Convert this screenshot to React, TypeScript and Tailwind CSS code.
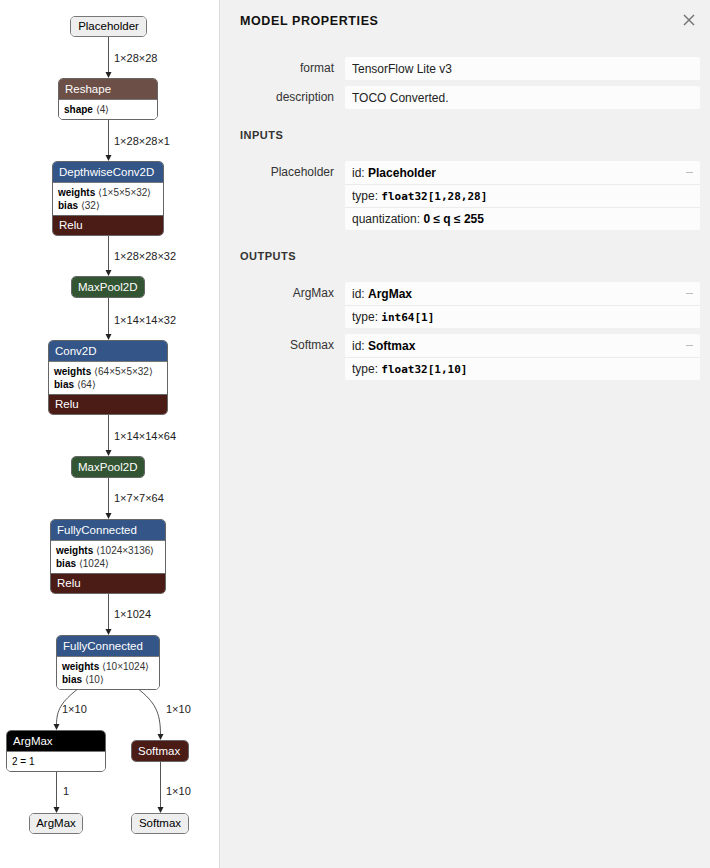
import React from 'react';

type Kind = 'io' | 'shape' | 'layer' | 'pool' | 'act' | 'black';

type GraphNode = {
  x: number;
  y: number;
  w: number;
  title: string;
  kind: Kind;
  attrs?: [string, string][];
  footer?: string;
};

const headerClass: Record<Kind, string> = {
  io: 'bg-[#eeeeee] text-black justify-center',
  shape: 'bg-[#6c4f47] text-white',
  layer: 'bg-[#335588] text-white',
  pool: 'bg-[#335533] text-white',
  act: 'bg-[#4b1b16] text-white',
  black: 'bg-black text-white',
};

const nodes: GraphNode[] = [
  { x: 70, y: 16, w: 77, title: 'Placeholder', kind: 'io' },
  { x: 58, y: 78, w: 100, title: 'Reshape', kind: 'shape', attrs: [['shape', '⟨4⟩']] },
  {
    x: 52, y: 161, w: 112, title: 'DepthwiseConv2D', kind: 'layer',
    attrs: [['weights', '⟨1×5×5×32⟩'], ['bias', '⟨32⟩']], footer: 'Relu',
  },
  { x: 71, y: 276, w: 74, title: 'MaxPool2D', kind: 'pool' },
  {
    x: 48, y: 340, w: 120, title: 'Conv2D', kind: 'layer',
    attrs: [['weights', '⟨64×5×5×32⟩'], ['bias', '⟨64⟩']], footer: 'Relu',
  },
  { x: 71, y: 456, w: 74, title: 'MaxPool2D', kind: 'pool' },
  {
    x: 50, y: 519, w: 116, title: 'FullyConnected', kind: 'layer',
    attrs: [['weights', '⟨1024×3136⟩'], ['bias', '⟨1024⟩']], footer: 'Relu',
  },
  {
    x: 56, y: 635, w: 104, title: 'FullyConnected', kind: 'layer',
    attrs: [['weights', '⟨10×1024⟩'], ['bias', '⟨10⟩']],
  },
  { x: 6, y: 730, w: 100, title: 'ArgMax', kind: 'black', attrs: [['', '2 = 1']] },
  { x: 131, y: 740, w: 58, title: 'Softmax', kind: 'act' },
  { x: 29, y: 813, w: 54, title: 'ArgMax', kind: 'io' },
  { x: 131, y: 813, w: 58, title: 'Softmax', kind: 'io' },
];

const edgeLabels: { x: number; y: number; text: string }[] = [
  { x: 114, y: 58, text: '1×28×28' },
  { x: 114, y: 141, text: '1×28×28×1' },
  { x: 114, y: 256, text: '1×28×28×32' },
  { x: 114, y: 320, text: '1×14×14×32' },
  { x: 114, y: 436, text: '1×14×14×64' },
  { x: 114, y: 498, text: '1×7×7×64' },
  { x: 114, y: 614, text: '1×1024' },
  { x: 62, y: 709, text: '1×10' },
  { x: 166, y: 709, text: '1×10' },
  { x: 63, y: 791, text: '1' },
  { x: 166, y: 791, text: '1×10' },
];

// straight edges: x, from y, to y (arrow tip)
const straight: [number, number, number][] = [
  [108.5, 37, 78],
  [108.5, 118, 161],
  [108.5, 234, 276],
  [108.5, 298, 340],
  [108.5, 413, 456],
  [108.5, 477, 519],
  [108.5, 593, 635],
  [56.5, 770, 813],
  [160.5, 761, 813],
];

const Arrow = ({ x, y }: { x: number; y: number }) => (
  <path d={`M${x - 3} ${y - 6} L${x + 3} ${y - 6} L${x} ${y} Z`} fill="#222" />
);

const Edges = () => (
  <svg className="absolute inset-0" width="219" height="868">
    {straight.map(([x, y1, y2], i) => (
      <g key={i}>
        <line x1={x} y1={y1} x2={x} y2={y2 - 5} stroke="#555" strokeWidth="1" />
        <Arrow x={x} y={y2} />
      </g>
    ))}
    <path d="M79 688 C61 702, 56.5 710, 56.5 725" stroke="#555" strokeWidth="1" fill="none" />
    <Arrow x={56.5} y={730} />
    <path d="M137 688 C155 702, 160.5 712, 160.5 735" stroke="#555" strokeWidth="1" fill="none" />
    <Arrow x={160.5} y={740} />
  </svg>
);

const Node = ({ node }: { node: GraphNode }) => {
  return (
    <div
      className={`absolute rounded-[5px] border overflow-hidden ${
        node.kind === 'io' ? 'border-[#777]' : 'border-[#666]'
      }`}
      style={{ left: node.x, top: node.y, width: node.w }}
    >
      <div
        className={`flex items-center px-[6px] text-[11.5px] leading-[13px] whitespace-nowrap ${
          node.kind === 'io' ? 'h-[19px]' : 'h-[20px]'
        } ${headerClass[node.kind]}`}
      >
        {node.title}
      </div>
      {node.attrs && (
        <div className="bg-white border-t border-[#777] px-[5px] py-[3px] text-[10px] leading-[13px] text-black">
          {node.attrs.map(([k, v], i) => (
            <div key={i} className="whitespace-nowrap">
              {k && <span className="font-bold">{k}</span>}
              {k && ' '}
              <span className={k ? 'text-[#333]' : ''}>{v}</span>
            </div>
          ))}
        </div>
      )}
      {node.footer && (
        <div className="h-[20px] flex items-center px-[6px] bg-[#4b1b16] text-white text-[11.5px] border-t border-[#666]">
          {node.footer}
        </div>
      )}
    </div>
  );
};

const Graph = () => (
  <div className="relative w-[219px] h-[868px] bg-white shrink-0 font-['Liberation_Sans',sans-serif]">
    <Edges />
    {edgeLabels.map((l, i) => (
      <span
        key={i}
        className="absolute text-[11px] leading-[12px] text-[#222] whitespace-nowrap"
        style={{ left: l.x, top: l.y - 6 }}
      >
        {l.text}
      </span>
    ))}
    {nodes.map((n, i) => (
      <Node key={i} node={n} />
    ))}
  </div>
);

const Dash = () => <div className="w-[7px] h-px bg-[#bbbbbb] ml-auto" />;

const Cell = ({ children, first, dash }: { children: React.ReactNode; first?: boolean; dash?: boolean }) => (
  <div className={`flex items-center px-[7px] h-[23px] ${first ? '' : 'border-t border-[#ebebeb]'}`}>
    <span className="whitespace-nowrap">{children}</span>
    {dash && <Dash />}
  </div>
);

const Row = ({ label, children }: { label: string; children: React.ReactNode }) => (
  <div className="flex">
    <div className="w-[94px] h-[22px] flex items-center justify-end text-[#333]">{label}</div>
    <div className="ml-[11px] flex-1 bg-[#fcfcfc] rounded-[2px]">{children}</div>
  </div>
);

const Mono = ({ children }: { children: React.ReactNode }) => (
  <span className="font-['DejaVu_Sans_Mono',monospace] font-bold text-[11px] text-black">{children}</span>
);

const Section = ({ title }: { title: string }) => (
  <div className="mt-[19px] h-[14px] leading-[14px] text-[11px] font-bold tracking-[0.5px] text-[#333]">{title}</div>
);

const Properties = () => (
  <div className="flex-1 h-[868px] bg-[#f1f1f1] border-l border-[#dddddd] pl-5 pr-[10px] text-[12px] text-[#222] font-['Liberation_Sans',sans-serif]">
    <div className="h-[42px] flex items-center justify-between">
      <span className="font-bold text-[12.5px] tracking-[0.6px] text-[#111]">MODEL PROPERTIES</span>
      <svg width="12" height="12" viewBox="0 0 12 12" className="mr-[5px] -mt-[3px]">
        <path d="M1 1 L11 11 M11 1 L1 11" stroke="#777" strokeWidth="1.5" />
      </svg>
    </div>

    <div className="mt-[15px] flex flex-col gap-[6px]">
      <Row label="format">
        <Cell first>TensorFlow Lite v3</Cell>
      </Row>
      <Row label="description">
        <Cell first>TOCO Converted.</Cell>
      </Row>
    </div>

    <Section title="INPUTS" />
    <div className="mt-[19px]">
      <Row label="Placeholder">
        <Cell first dash>
          id: <span className="font-bold text-black">Placeholder</span>
        </Cell>
        <Cell>
          type: <Mono>float32[1,28,28]</Mono>
        </Cell>
        <Cell>
          quantization: <span className="font-bold text-black">0 ≤ q ≤ 255</span>
        </Cell>
      </Row>
    </div>

    <Section title="OUTPUTS" />
    <div className="mt-[19px] flex flex-col gap-[6px]">
      <Row label="ArgMax">
        <Cell first dash>
          id: <span className="font-bold text-black">ArgMax</span>
        </Cell>
        <Cell>
          type: <Mono>int64[1]</Mono>
        </Cell>
      </Row>
      <Row label="Softmax">
        <Cell first dash>
          id: <span className="font-bold text-black">Softmax</span>
        </Cell>
        <Cell>
          type: <Mono>float32[1,10]</Mono>
        </Cell>
      </Row>
    </div>
  </div>
);

export default function App() {
  return (
    <div className="flex w-[710px] h-[868px] overflow-hidden">
      <Graph />
      <Properties />
    </div>
  );
}
